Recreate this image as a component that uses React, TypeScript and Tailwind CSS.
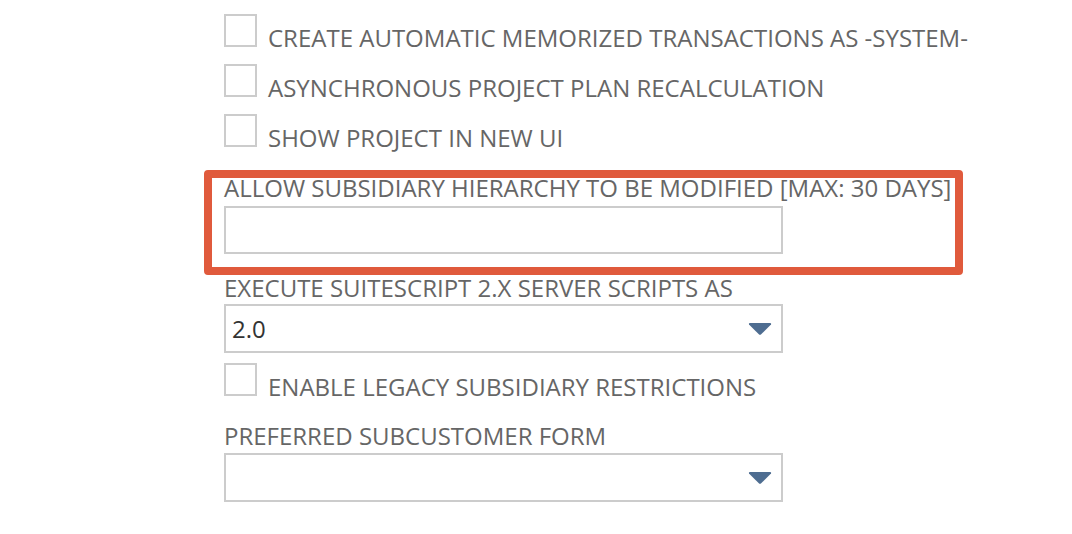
import React from 'react';

const Checkbox: React.FC<{ label: string; className?: string }> = ({ label, className = '' }) => (
  <div className={`h-[33px] flex items-baseline gap-[11px] ${className}`}>
    <div className="w-[33px] h-[33px] shrink-0 border-2 border-[#cccccc] bg-white"></div>
    <span className="text-[24px] leading-[20px] whitespace-nowrap">{label}</span>
  </div>
);

const Caret = () => (
  <svg width="24" height="12" viewBox="0 0 24 12" className="shrink-0">
    <path d="M1 1.5 Q0.5 0 2 0 H22 Q23.5 0 23 1.5 L13.2 11.2 Q12 12.2 10.8 11.2 Z" fill="#4e6d91" />
  </svg>
);

const Select: React.FC<{ value?: string; className?: string }> = ({ value, className = '' }) => (
  <div className={`w-[559px] h-[49px] border-2 border-[#cccccc] bg-white flex items-center justify-between pl-[6px] pr-[9px] ${className}`}>
    <span className="text-[24px] text-[#333333] leading-none">{value}</span>
    <Caret />
  </div>
);

export default function App() {
  return (
    <div
      className="w-[1072px] h-[534px] bg-white text-[#666666] overflow-hidden"
      style={{ fontFamily: '"Open Sans", "Noto Sans", sans-serif' }}
    >
      <div className="pl-[224px] pt-[14px] flex flex-col">
        <Checkbox label="CREATE AUTOMATIC MEMORIZED TRANSACTIONS AS -SYSTEM-" />
        <Checkbox label="ASYNCHRONOUS PROJECT PLAN RECALCULATION" className="mt-[17px]" />
        <Checkbox label="SHOW PROJECT IN NEW UI" className="mt-[17px]" />

        <div className="-ml-[20px] mt-[23px] w-[759px] border-8 border-[#e05a3c] rounded-[4px] pl-[12px] pb-[13px]">
          <div className="text-[24px] leading-[20px] whitespace-nowrap">
            ALLOW SUBSIDIARY HIERARCHY TO BE MODIFIED [MAX: 30 DAYS]
          </div>
          <div className="mt-[8px] w-[559px] h-[48px] border-2 border-[#cccccc] bg-white"></div>
        </div>

        <div className="mt-[3px] text-[24px] leading-[20px] whitespace-nowrap">EXECUTE SUITESCRIPT 2.X SERVER SCRIPTS AS</div>
        <Select value="2.0" className="mt-[6px]" />

        <Checkbox label="ENABLE LEGACY SUBSIDIARY RESTRICTIONS" className="mt-[10px]" />

        <div className="mt-[30px] text-[24px] leading-[20px] whitespace-nowrap">PREFERRED SUBCUSTOMER FORM</div>
        <Select className="mt-[7px]" />
      </div>
    </div>
  );
}
